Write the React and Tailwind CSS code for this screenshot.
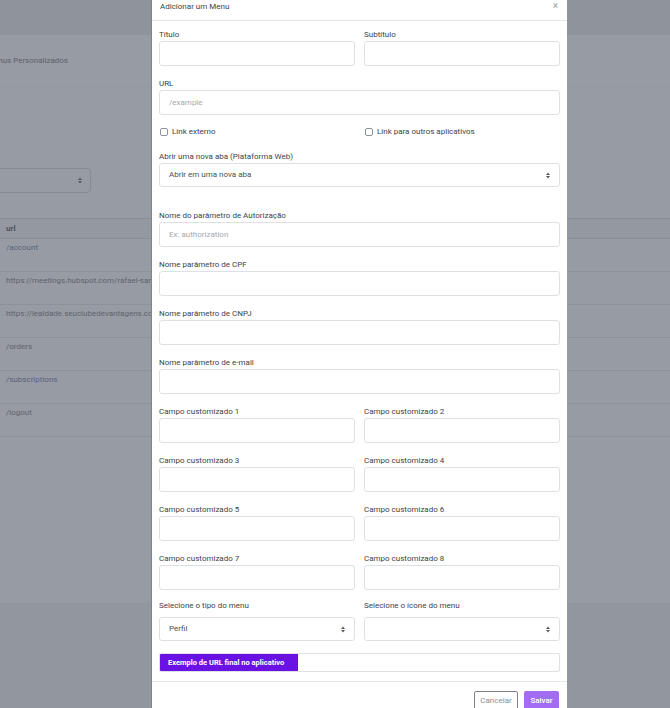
import React from 'react';

const font = { fontFamily: 'Roboto, "Liberation Sans", sans-serif' };

const Arrows = () => (
  <svg width="4" height="7" viewBox="0 0 4 7" className="shrink-0">
    <path d="M0 3 L2 0.5 L4 3 Z" fill="#555a60" />
    <path d="M0 4 L2 6.5 L4 4 Z" fill="#555a60" />
  </svg>
);

const Label = ({ children }) => (
  <label className="block h-[12px] leading-[12px] text-[8px] text-[#3d4248]">{children}</label>
);

const Input = ({ placeholder }) => (
  <input
    placeholder={placeholder}
    className="block w-full h-[25px] rounded-[3px] border border-[#dde1e6] bg-white px-[9px] text-[8px] text-[#4a4f55] placeholder:text-[#a3a8ae] outline-none"
  />
);

const Field = ({ label, placeholder }) => (
  <div>
    <Label>{label}</Label>
    <Input placeholder={placeholder} />
  </div>
);

const Select = ({ value }) => (
  <div className="flex h-[24px] w-full items-center justify-between rounded-[3px] border border-[#dde1e6] bg-white pl-[9px] pr-[9px]">
    <span className="text-[8px] text-[#4a4f55]">{value}</span>
    <Arrows />
  </div>
);

const Checkbox = ({ label }) => (
  <div className="flex items-center gap-[4px] pl-px">
    <span className="h-[8px] w-[8px] rounded-[2px] border border-[#8d939a] bg-white" />
    <span className="text-[8px] text-[#3d4248]">{label}</span>
  </div>
);

const rows = [
  { url: '/account', blue: true },
  { url: 'https://meetings.hubspot.com/rafael-santos-souza' },
  { url: 'https://lealdade.seuclubedevantagens.com.br/login' },
  { url: '/orders' },
  { url: '/subscriptions', blue: true },
  { url: '/logout' },
];

const Background = () => (
  <div className="flex h-[708px] flex-col bg-[#979ba3]">
    <div className="h-[35px] bg-[#8f939b]" />
    <div className="h-[51px] pt-[21px]">
      <div className="-ml-[13px] whitespace-nowrap text-[8px] leading-[10px] text-[#5c6169]">Menus Personalizados</div>
    </div>
    <div className="h-[82px] border-t border-[#93979f]" />
    <div className="-ml-[20px] flex h-[25px] w-[111px] items-center justify-end rounded-[4px] border border-[#878b93] pr-[8px]">
      <Arrows />
    </div>
    <div className="h-[25px]" />
    <div className="flex h-[21px] items-center border-t border-b border-[#898d95] bg-[#9499a1] px-[6px] text-[8px] font-bold text-[#4d535b]">
      url
    </div>
    {rows.map((r) => (
      <div key={r.url} className="h-[33px] shrink-0 border-b border-[#8d9199] px-[6px] pt-[4px]">
        <div
          className={`w-[145px] overflow-hidden whitespace-nowrap text-[8px] leading-[10px] ${
            r.blue ? 'text-[#58637a]' : 'text-[#5e646c]'
          }`}
        >
          {r.url}
        </div>
      </div>
    ))}
    <div className="h-[166px]" />
    <div className="flex-1 bg-[#92969e]" />
  </div>
);

const Modal = () => (
  <div className="absolute left-[151px] top-0 h-[708px] w-[416px] border-l border-[#80848b] bg-white">
    <div className="flex h-[21px] items-start justify-between border-b border-[#e3e6ea] pl-[8px] pr-[9px]">
      <span className="pt-px text-[8px] leading-[12px] text-[#3d4248]">Adicionar um Menu</span>
      <span className="text-[10px] leading-[11px] text-[#9a9fa5]">×</span>
    </div>

    <div className="flex flex-col px-[7px] pt-[8px] pb-[9px]">
      <div className="grid grid-cols-2 gap-x-[9px]">
        <Field label="Título" />
        <Field label="Subtítulo" />
      </div>
      <div className="mt-[12px]">
        <Field label="URL" placeholder="/example" />
      </div>
      <div className="mt-[11px] grid h-[12px] grid-cols-2 gap-x-[9px]">
        <Checkbox label="Link externo" />
        <Checkbox label="Link para outros aplicativos" />
      </div>
      <div className="mt-[13px]">
        <Label>Abrir uma nova aba (Plataforma Web)</Label>
        <Select value="Abrir em uma nova aba" />
      </div>
      <div className="mt-[23px]">
        <Field label="Nome do parâmetro de Autorização" placeholder="Ex: authorization" />
      </div>
      <div className="mt-[12px]">
        <Field label="Nome parâmetro de CPF" />
      </div>
      <div className="mt-[12px]">
        <Field label="Nome parâmetro de CNPJ" />
      </div>
      <div className="mt-[12px]">
        <Field label="Nome parâmetro de e-mail" />
      </div>
      {[1, 3, 5, 7].map((n) => (
        <div key={n} className="mt-[12px] grid grid-cols-2 gap-x-[9px]">
          <Field label={`Campo customizado ${n}`} />
          <Field label={`Campo customizado ${n + 1}`} />
        </div>
      ))}
      <div className="mt-[10px] grid grid-cols-2 gap-x-[9px]">
        <div>
          <div className="mb-[5px]">
            <Label>Selecione o tipo do menu</Label>
          </div>
          <Select value="Perfil" />
        </div>
        <div>
          <div className="mb-[5px]">
            <Label>Selecione o ícone do menu</Label>
          </div>
          <Select value="" />
        </div>
      </div>
      <div className="mt-[12px] flex h-[19px] overflow-hidden rounded-[2px] border border-[#dde1e6]">
        <div className="flex w-[138px] items-center bg-[#6a12e4] pl-[8px]">
          <span className="text-[7.5px] font-bold text-white">Exemplo de URL final no aplicativo</span>
        </div>
      </div>
    </div>

    <div className="flex justify-end gap-[6px] border-t border-[#e3e6ea] px-[8px] pt-[9px]">
      <button className="h-[20px] w-[44px] rounded-[2px] border border-[#7d8288] bg-white text-[8px] text-[#8a8f95]">
        Cancelar
      </button>
      <button className="h-[20px] w-[35px] rounded-[2px] bg-[#a46cf2] text-[8px] font-medium text-white">
        Salvar
      </button>
    </div>
  </div>
);

export default function App() {
  return (
    <div className="relative h-[708px] w-[670px] overflow-hidden" style={font}>
      <Background />
      <Modal />
    </div>
  );
}
